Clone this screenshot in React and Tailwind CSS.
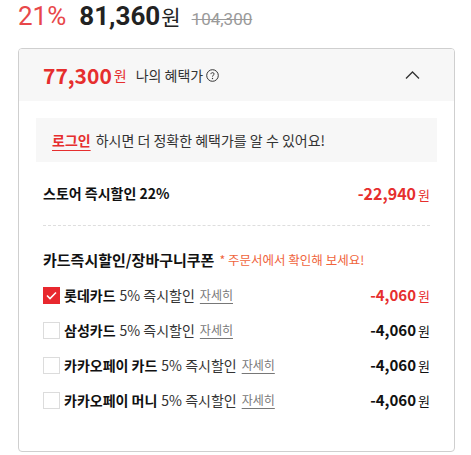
import React, { useState } from 'react';

const KR = { fontFamily: '"Noto Sans CJK KR", "Noto Sans", sans-serif' };

const cards = [
  { name: '롯데카드', checked: true },
  { name: '삼성카드', checked: false },
  { name: '카카오페이 카드', checked: false },
  { name: '카카오페이 머니', checked: false },
];

const Check = ({ on }) =>
  on ? (
    <span className="w-[17px] h-[17px] bg-[#e8282e] flex items-center justify-center shrink-0">
      <svg width="11" height="9" viewBox="0 0 11 9" fill="none">
        <path d="M1 4.5 L4 7.5 L10 1.5" stroke="#fff" strokeWidth="1.6" />
      </svg>
    </span>
  ) : (
    <span className="w-[17px] h-[17px] border border-[#dcdcdc] bg-white shrink-0" />
  );

export default function App() {
  const [open] = useState(true);

  return (
    <div className="w-[471px] h-[455px] bg-white overflow-hidden" style={KR}>
      <div className="pl-[18px] pt-[2px] h-[30px] flex items-baseline leading-[28px] font-['Roboto']">
        <span className="text-[26px] text-[#e8474a]">21%</span>
        <span className="text-[26px] font-bold text-[#222] ml-[13px]">81,360</span>
        <span className="text-[21px] text-[#222] leading-none ml-[1px]" style={KR}>원</span>
        <span className="text-[17px] text-[#9a9a9a] line-through ml-[11px]">104,300</span>
      </div>

      <div className="mt-[18px] ml-[18px] w-[437px] h-[404px] border border-[#cfcfcf] rounded-[4px] overflow-hidden">
        <div className="h-[52px] bg-[#f7f7f7] flex items-center pl-[24px] pr-[34px]">
          <span className="text-[21px] font-bold text-[#e62e2e] leading-none">77,300</span>
          <span className="text-[14px] text-[#e62e2e] ml-[2px]">원</span>
          <span className="text-[14px] text-[#333] ml-[9px]">나의 혜택가</span>
          <svg className="ml-[3px] mt-[1px]" width="13" height="13" viewBox="0 0 13 13" fill="none">
            <circle cx="6.5" cy="6.5" r="5.8" stroke="#333" strokeWidth="1" />
            <path d="M4.9 5.1 C4.9 3.2 8.1 3.2 8.1 5 C8.1 6.2 6.5 6.2 6.5 7.6" stroke="#333" strokeWidth="1" fill="none" />
            <circle cx="6.5" cy="9.5" r="0.7" fill="#333" />
          </svg>
          <svg className="ml-auto" width="15" height="8" viewBox="0 0 15 8" fill="none">
            <path d={open ? 'M1 7.5 L7.5 1 L14 7.5' : 'M1 1 L7.5 7.5 L14 1'} stroke="#333" strokeWidth="1.3" />
          </svg>
        </div>

        <div className="px-[24px]">
          <div className="-mx-[7px] mt-[17px] h-[44px] bg-[#f7f7f7] flex items-center px-[16px] text-[14px] text-[#333]">
            <span className="font-bold text-[#e62e2e] underline underline-offset-[4px] decoration-[1px]">로그인</span>
            <span className="ml-[5px]">하시면 더 정확한 혜택가를 알 수 있어요!</span>
          </div>

          <div className="mt-[20px] h-[22px] flex items-center justify-between">
            <span className="text-[14px] font-bold text-[#111]">스토어 즉시할인 22%</span>
            <span className="flex items-baseline text-[#e62e2e]">
              <span className="text-[16px] font-bold">-22,940</span>
              <span className="text-[13px] ml-[2px]">원</span>
            </span>
          </div>

          <div className="mt-[21px] border-t border-dashed border-[#dedede]" />

          <div className="mt-[23px] h-[22px] flex items-center">
            <span className="text-[15px] font-bold text-[#111]">카드즉시할인/장바구니쿠폰</span>
            <span className="text-[12.5px] text-[#f0643c] ml-[5px]">* 주문서에서 확인해 보세요!</span>
          </div>

          <div className="mt-[13px] flex flex-col gap-[13px]">
            {cards.map((c) => (
              <div key={c.name} className="h-[22px] flex items-center">
                <Check on={c.checked} />
                <span className="ml-[4px] text-[14px] font-bold text-[#111]">{c.name}</span>
                <span className="ml-[4px] text-[14px] text-[#333]">5% 즉시할인</span>
                <span className="ml-[5px] text-[12px] text-[#777] underline underline-offset-[3px]">자세히</span>
                <span className={'ml-auto flex items-baseline ' + (c.checked ? 'text-[#e62e2e]' : 'text-[#111]')}>
                  <span className="text-[15px] font-bold">-4,060</span>
                  <span className="text-[13px] ml-[2px]">원</span>
                </span>
              </div>
            ))}
          </div>
        </div>
      </div>
    </div>
  );
}
